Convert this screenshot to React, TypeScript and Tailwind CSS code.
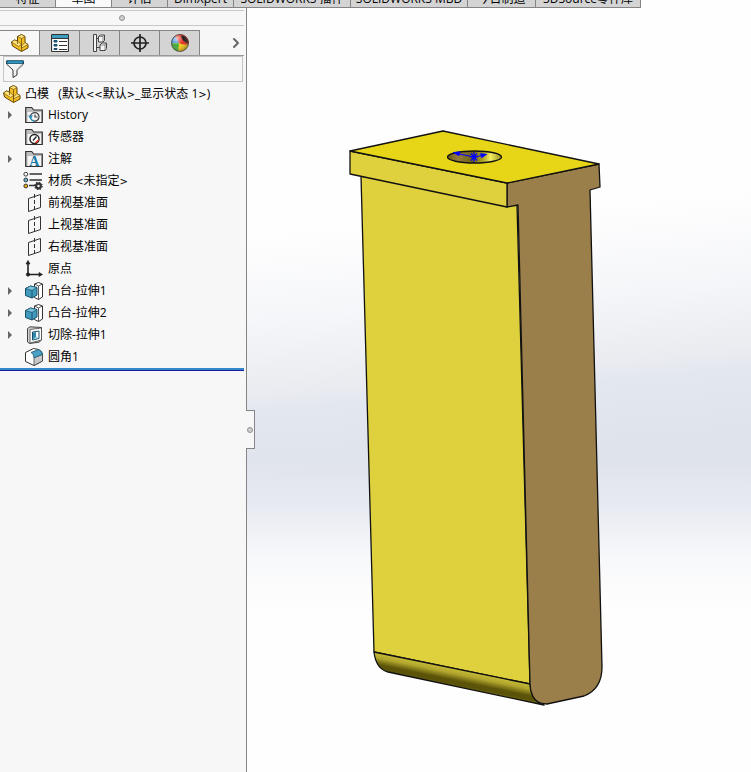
import { useState } from 'react';
import type { ReactNode } from 'react';
import { ChevronRight } from 'lucide-react';

const COMMAND_TABS = [
  { label: '特征', width: 'w-14' },
  { label: '草图', width: 'w-14' },
  { label: '评估', width: 'w-14' },
  { label: 'DimXpert', width: 'w-[66px]' },
  { label: 'SOLIDWORKS 插件', width: 'w-[117px]' },
  { label: 'SOLIDWORKS MBD', width: 'w-[117px]' },
  { label: '今日制造', width: 'w-[68px]' },
  { label: '3DSource零件库', width: 'w-[105px]' },
];

function PartIcon() {
  return (
    <svg viewBox="0 0 18 18" className="size-[18px]" stroke="#5f4406" strokeLinejoin="round">
      <path d="M.5 8 3.500 6 6.500 7V2.500L10.500.5l3.500 2v6l3 2v3.500l-6.500 3.500L1.500 12Z" fill="#f3bd24" />
      <path d="m6.500 2.500 4-2 3.500 2-3.500 2ZM.5 8l3-2 3 1 4 3.500-3 2ZM10.500 12l3.500-3.500 3 2-6.500 3.500Z" fill="#ffe27a" strokeWidth=".6" />
      <path d="M10.500 4.500v13M6.500 7v3" fill="none" strokeWidth=".7" />
    </svg>
  );
}

function PropertyIcon() {
  return (
    <svg viewBox="0 0 18 18" className="size-[18px]" fill="none" stroke="#333">
      <rect x=".5" y=".5" width="17" height="17" rx="1" fill="#fff" strokeWidth="1.200" />
      <path d="M1 1h16v3H1z" fill="#3b9cc0" stroke="none" />
      <path d="M.5 4.500h17M8 7.500h8M8 11.500h8M8 15.500h8" />
      <path d="M3 6.500h3v1.500H3zM3 10.500h3v1.500H3zM3 14.500h3v1H3z" fill="#2878a0" stroke="#174d68" />
    </svg>
  );
}

function ConfigurationIcon() {
  return (
    <svg viewBox="0 0 18 18" className="size-[18px]" fill="#f4f4f4" stroke="#444" strokeLinejoin="round">
      <path d="M2.500.5h3v17h-3zM5.500 4.500H8M5.500 13.500H9" />
      <path d="m7.500 2.500 2-1.500h4v5.500L12 8H7.500ZM9 11l2-2h4.500v5.500L14 16.500H9Z" />
      <path d="M7.500 2.500H12V8M12 2.500 13.500 1M9 11h5v5.500M14 11l1.500-2" fill="none" strokeWidth=".6" />
    </svg>
  );
}

function TargetIcon() {
  return (
    <svg viewBox="0 0 18 18" className="size-[18px]" fill="none" stroke="#222" strokeWidth="1.700">
      <circle cx="9" cy="9" r="6" />
      <path d="M9 0v18M0 9h18" />
    </svg>
  );
}

function AppearanceIcon() {
  return (
    <svg viewBox="0 0 18 18" className="size-[18px]">
      <defs>
        <radialGradient id="ball" cx=".3" cy=".25" r=".8">
          <stop offset="0" stopColor="#fff" stopOpacity=".7" />
          <stop offset=".5" stopColor="#fff" stopOpacity="0" />
          <stop offset="1" stopColor="#000" stopOpacity=".35" />
        </radialGradient>
      </defs>
      <circle cx="9" cy="9" r="8.500" fill="#f3c71c" />
      <path d="M8 9 .5 9.500A8.500 8.500 0 0 1 5 1.500Z" fill="#3485db" />
      <path d="M8 9 4 2A8.500 8.500 0 0 1 17.500 10q-4 2-9.500-1Z" fill="#e33226" />
      <path d="M.5 9.500 8 9l-1 8.300A8.500 8.500 0 0 1 .5 9.500Z" fill="#43a83c" />
      <path d="M10 2c3-1 7 3 7 7-3 0-6-3-7-7Z" fill="#1d1d1d" />
      <circle cx="9" cy="9" r="8.500" fill="url(#ball)" stroke="#333" strokeWidth=".7" />
    </svg>
  );
}

function FilterIcon() {
  return (
    <svg viewBox="0 0 18 18" className="size-[18px]" stroke="#333">
      <path d="M.5 1h17v3L11 10v5l-4 2.500V10L.5 4Z" fill="#f2f2f2" />
      <path d="M.8.8h16.400v2.700H.8z" fill="#2f9ac6" stroke="#174d68" strokeWidth=".8" />
      <path d="m11 10 5-5" stroke="#999" strokeWidth="1.500" />
    </svg>
  );
}

function FolderIcon({ children }: { children: ReactNode }) {
  return (
    <svg viewBox="0 0 18 18" className="size-[18px]" fill="none">
      <path d="M.7 16.500V1.500h6l2 2.500h8.600v12.500Z" fill="#bdbdbd" stroke="#333" strokeWidth="1.200" />
      <path d="M2.500 6h13.500v10H2.500z" fill="#f4f4f4" />
      {children}
    </svg>
  );
}

function HistoryIcon() {
  return (
    <FolderIcon>
      <path d="M5.500 10a4.300 4.300 0 1 1 3 5M10 8.500V11h2.500" stroke="#444" strokeWidth="1.200" />
      <path d="M3 9.500h5l-2.500 3.500Z" fill="#258bb8" />
      <path d="M5.500 11.500q.5 3 3.500 3.500" stroke="#258bb8" strokeWidth="1.500" />
    </FolderIcon>
  );
}

function SensorIcon() {
  return (
    <FolderIcon>
      <circle cx="9.500" cy="11" r="4.500" fill="#fff" stroke="#222" strokeWidth="1.500" />
      <path d="M10 14.800 12 13l1.500-1.500q0 3-3.500 3.300Z" stroke="#e0381f" fill="#e0381f" />
      <path d="m8 12.500 3.500-4" stroke="#222" strokeWidth="1.300" />
    </FolderIcon>
  );
}

function AnnotationIcon() {
  return (
    <FolderIcon>
      <text x="9.300" y="15.500" textAnchor="middle" fill="#1978a5" fontFamily="Liberation Serif, serif" fontWeight="bold" fontSize="14">A</text>
    </FolderIcon>
  );
}

function MaterialIcon() {
  return (
    <svg viewBox="0 0 20 18" className="-ml-0.5 h-[18px] w-5 shrink-0" stroke="#333">
      <path d="M6.500 2H19M6.500 8H19M6 13.500h7" strokeWidth="1.700" />
      <circle cx="2.800" cy="2.200" r="1.900" fill="#fff" />
      <circle cx="2.800" cy="8" r="1.900" fill="#68bbdc" />
      <circle cx="2.800" cy="14" r="1.900" fill="#f0b51c" />
      <circle cx="15.500" cy="14" r="2.300" fill="#f6f6f6" strokeWidth="2.200" />
      <circle cx="15.500" cy="14" r="3.700" fill="none" strokeWidth="1.200" strokeDasharray="1.450 1.450" />
    </svg>
  );
}

function PlaneIcon() {
  return (
    <svg viewBox="0 0 18 18" className="size-[18px]" fill="none" stroke="#333">
      <path d="m3.500 4.500 12-4v13l-12 4Z" />
      <path d="M9.500 0v18" strokeDasharray="4 2" />
    </svg>
  );
}

function OriginIcon() {
  return (
    <svg viewBox="0 0 18 18" className="size-[18px]" fill="#222" stroke="#222">
      <path d="M3 2v12.500H15" fill="none" strokeWidth="1.600" />
      <path d="M1 4 3 .5 5 4ZM14 12.500l3.500 2-3.500 2Z" strokeWidth=".7" />
      <circle cx="3" cy="14.500" r="1.600" />
    </svg>
  );
}

function BossIcon() {
  return (
    <svg viewBox="0 0 18 18" className="size-[18px]" stroke="#333" strokeLinejoin="round">
      <path d="m9.500 2 4-1.500 4 1.500v13l-4 2.500-4-2Z" fill="#fff" />
      <path d="M13.500 4v13.500M9.500 2l4 2 4-2" fill="none" strokeWidth=".8" />
      <path d="m.5 6.500 5-2.500L12 5.500V13l-5 3-6.500-2.500Z" fill="#4199bd" stroke="#174f68" />
      <path d="m.5 6.500 5-2.500L12 5.500 7 8.500Z" fill="#7cc2dc" stroke="#174f68" strokeWidth=".7" />
      <path d="M7 8.500V16" stroke="#174f68" strokeWidth=".9" />
    </svg>
  );
}

function CutIcon() {
  return (
    <svg viewBox="0 0 18 18" className="size-[18px]" stroke="#444" strokeLinejoin="round">
      <path d="M2.500 2.500 5 .8l11.500.7V14L14 16.200l-9.500 1.300-2-1.500Z" fill="#d4d4d4" />
      <path d="M5 3.500 16.500 2v12L5 17Z" fill="#fff" strokeWidth=".8" />
      <path d="m7.500 6 6.500-1v7.500L7.500 14Z" fill="#fff" stroke="#174f68" />
      <path d="m8 6.500 3-.5v4.500l-3 3Z" fill="#2f86ad" stroke="none" />
      <path d="m8 13.500 3-3 2.500 1.500Z" fill="#7cc2dc" stroke="none" />
    </svg>
  );
}

function FilletIcon() {
  return (
    <svg viewBox="0 0 18 18" className="size-[18px]" stroke="#333" strokeLinejoin="round">
      <path d="M.5 4.500 8.500.5l5 1q3.500 1.500 4 5V13l-8.500 4.500-8.500-4Z" fill="#fff" />
      <path d="M9 9.500 17.500 6v7L9 17.500Z" fill="#c9c9c9" strokeWidth=".7" />
      <path d="m6 4.500 7.500-3q3.500 1 4 5L9 9.800Q9 6 6 4.500Z" fill="#4aa2c7" stroke="#174f68" strokeWidth=".8" />
    </svg>
  );
}

const PANEL_TABS = [
  { label: 'FeatureManager', icon: <PartIcon /> },
  { label: 'PropertyManager', icon: <PropertyIcon /> },
  { label: 'ConfigurationManager', icon: <ConfigurationIcon /> },
  { label: 'DimXpertManager', icon: <TargetIcon /> },
  { label: 'DisplayManager', icon: <AppearanceIcon /> },
];

const FEATURES = [
  { name: 'History', icon: <HistoryIcon />, expandable: true },
  { name: '传感器', icon: <SensorIcon /> },
  { name: '注解', icon: <AnnotationIcon />, expandable: true },
  { name: '材质 <未指定>', icon: <MaterialIcon /> },
  { name: '前视基准面', icon: <PlaneIcon /> },
  { name: '上视基准面', icon: <PlaneIcon /> },
  { name: '右视基准面', icon: <PlaneIcon /> },
  { name: '原点', icon: <OriginIcon /> },
  { name: '凸台-拉伸1', icon: <BossIcon />, expandable: true },
  { name: '凸台-拉伸2', icon: <BossIcon />, expandable: true },
  { name: '切除-拉伸1', icon: <CutIcon />, expandable: true },
  { name: '圆角1', icon: <FilletIcon /> },
];

// Angle brackets are set in a wider face than the rest of the label
function TreeLabel({ text }: { text: string }) {
  return (
    <span className="whitespace-pre">
      {text.split(/([<>])/).map((part, i) =>
        part === '<' || part === '>' ? (
          <span key={i} className="font-['DejaVu_Sans',sans-serif] text-[10px] leading-none">{part}</span>
        ) : (
          part
        )
      )}
    </span>
  );
}

function FeatureTree() {
  return (
    <div className="mr-0.5 border-b border-[#1a1a9c] pt-px">
      <div className="border-b-2 border-[#3388cc]">
        <div className="flex h-[21px] items-center gap-1 pl-[3px]">
          <PartIcon />
          <TreeLabel text="凸模   (默认<<默认>_显示状态 1>)" />
        </div>
        <ul>
          {FEATURES.map((feature) => (
            <li key={feature.name} className="flex h-[22px] items-center">
              <span className="flex w-6 shrink-0 pl-2">
                {feature.expandable && (
                  <button aria-label={`展开 ${feature.name}`}>
                    <svg viewBox="0 0 4 8" className="h-2 w-1" fill="#666">
                      <path d="M0 0v8l4-4Z" />
                    </svg>
                  </button>
                )}
              </span>
              <span className="flex w-6 shrink-0 pl-px">{feature.icon}</span>
              <TreeLabel text={feature.name} />
            </li>
          ))}
        </ul>
      </div>
    </div>
  );
}

function PartModel() {
  return (
    <svg viewBox="0 0 254 576" className="w-[254px] shrink-0" stroke="#111" strokeWidth="1.300" strokeLinejoin="round">
      <defs>
        <linearGradient id="fillet" gradientUnits="userSpaceOnUse" x1="105" y1="538" x2="101.300" y2="556">
          <stop offset="0" stopColor="#cabe38" />
          <stop offset=".3" stopColor="#b0a52d" />
          <stop offset=".65" stopColor="#5c5409" />
          <stop offset=".85" stopColor="#5a5208" />
          <stop offset="1" stopColor="#776d18" />
        </linearGradient>
        <linearGradient id="bore">
          <stop offset="0" stopColor="#6b5d13" />
          <stop offset=".2" stopColor="#967b3e" />
          <stop offset=".45" stopColor="#6e6413" />
          <stop offset=".65" stopColor="#aaa022" />
          <stop offset=".8" stopColor="#f5ee62" />
          <stop offset="1" stopColor="#988e1b" />
        </linearGradient>
      </defs>
      <path d="M12 46 168 75 181 554 25 522Z" fill="#dfd13d" />
      <path d="M25 522 181 554q2 18 14 21L39 542q-12-3-14-20Z" fill="url(#fillet)" />
      <path d="M158 53 250 34l1 23-10 3 12 477q0 22-18 29l-37 8q-16 0-17-20L169 75l-11 2Z" fill="#9b7f4a" />
      <path d="M1 21 158 53v24L1 44Z" fill="#dfd13d" />
      <path d="M1 21 94 1l156 33-92 19Z" fill="#e7d618" />
      <ellipse cx="125.500" cy="27" rx="27" ry="6" fill="url(#bore)" />
      <g stroke="#00f" fill="#00f" strokeWidth="1.200">
        <path d="m108 23.500 17 3.500 8-1.500M122 23.500l6 7M128 23.500l-6 7M125 22v10M121 27h8" fill="none" />
        <path d="m104 22.500 7-.8-1 4ZM131.500 23.500l6.500.8-5.500 3.500Z" strokeWidth=".6" />
      </g>
    </svg>
  );
}

export default function App() {
  const [activeCommand, setActiveCommand] = useState('草图');
  const [activePanel, setActivePanel] = useState('FeatureManager');

  return (
    <div className="flex min-h-screen flex-col bg-[#fefefe] font-['Open_Sans','Noto_Sans_CJK_SC',sans-serif] text-xs text-black">
      {/* Command tabs, scrolled up under the window frame */}
      <nav className="flex h-2 items-end overflow-hidden">
        {COMMAND_TABS.map((tab) => (
          <button
            key={tab.label}
            onClick={() => setActiveCommand(tab.label)}
            className={`${tab.width} h-[17px] shrink-0 border-r border-b border-[#858585] leading-4 whitespace-nowrap ${
              activeCommand === tab.label ? 'bg-[#f9f9f9]' : 'bg-[#d4d4d4]'
            }`}
          >
            {tab.label}
          </button>
        ))}
      </nav>

      <main className="flex grow">
        {/* Feature manager */}
        <aside className="w-[247px] shrink-0 border-r border-[#858585] bg-[#f7f7f7] pt-0.5">
          <div className="mr-0.5 flex h-4 items-center justify-center border-y border-[#c8c8c8]">
            <span className="size-1.5 rounded-full border border-[#909090] bg-[#d0d0d0]" />
          </div>
          <div className="mt-1 mr-0.5 flex h-[26px] border-b border-[#999]">
            {PANEL_TABS.map((tab) => (
              <button
                key={tab.label}
                aria-label={tab.label}
                onClick={() => setActivePanel(tab.label)}
                className={`flex w-10 items-center justify-center border-t border-r border-[#858585] ${
                  activePanel === tab.label ? 'bg-[#f7f7f7]' : 'bg-[#d4d4d4]'
                }`}
              >
                {tab.icon}
              </button>
            ))}
            <button aria-label="更多" className="ml-auto">
              <ChevronRight className="size-4 text-[#666]" strokeWidth={3} />
            </button>
          </div>
          <label className="mx-[3px] flex h-[26px] items-center border border-[#c4c4c4] pl-0.5">
            <FilterIcon />
            <input aria-label="筛选" className="min-w-0 grow bg-transparent px-1 outline-none" />
          </label>
          <FeatureTree />
        </aside>

        {/* Graphics area */}
        <section className="relative flex grow items-start justify-center bg-[linear-gradient(to_bottom,rgba(254,254,254,0)_59%,rgba(254,254,254,0.25)_65%,rgba(254,254,254,0.8)_72%,#fefefe_79%),linear-gradient(175deg,#fefefe_28%,#f5f6f9_39%,#e9ebf0_48%,#e3e7f0_50%,#dfe3ec_58%)] pt-[122px] pr-[46px]">
          <button
            aria-label="收起面板"
            className="absolute top-[402px] -left-px flex h-[39px] w-[9px] items-center justify-center border border-l-0 border-[#858585] bg-[#f7f7f7]"
          >
            <span className="size-1.5 rounded-full border border-[#909090] bg-[#d0d0d0]" />
          </button>
          <PartModel />
        </section>
      </main>
    </div>
  );
}
